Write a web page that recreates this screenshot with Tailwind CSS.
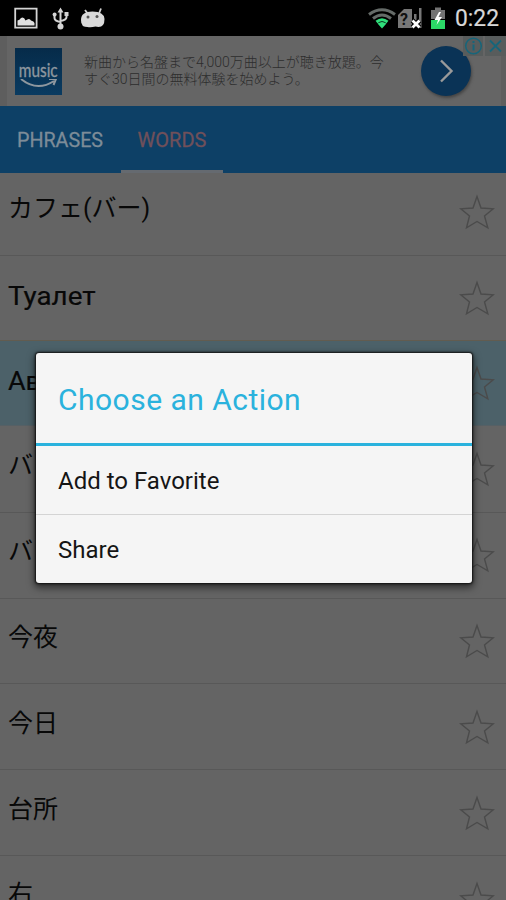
<!DOCTYPE html>
<html lang="ja">
<head>
<meta charset="utf-8">
<title>Words</title>
<script src="https://cdn.jsdelivr.net/npm/@tailwindcss/browser@4"></script>
</head>
<body class="bg-[#646464]">
<svg class="hidden"><symbol id="star" viewBox="0 0 36 36"><path d="M18 2.500 L22 14 L34.200 14.800 L25.500 22 L28.800 33.800 L18 27.500 L7.500 33.800 L10.500 22 L1.800 14.800 L14 14 Z" fill="none" stroke="#4b4b4b" stroke-width="1.400"/></symbol></svg>
<div class="relative w-[506px] h-[900px] overflow-hidden flex flex-col bg-[#646464] font-[Roboto,'Noto_Sans_CJK_JP',sans-serif]">
  <header class="h-[36px] shrink-0 bg-black flex items-center justify-between pl-[14px] pr-[6px]">
    <div class="flex items-center">
      <svg width="24" height="24" viewBox="0 0 24 24"><path d="M1.200 2.700h21.400v19H1.200z" fill="none" stroke="#d4d4d4" stroke-width="1.800"/><path d="M3.500 19.500v-5q2-.5 3.500-2.500q3-1.500 4.500 2.500q4-3 5.500 0q3 .5 3.500 2.500v2.500z" fill="#e0e0e0"/></svg>
      <svg class="ml-[14px]" width="18" height="24" viewBox="0 0 18 24" fill="none" stroke="#d4d4d4" stroke-width="2"><path d="M8.500 4v15M2.500 8v4q0 3 6 4M14.500 8v3q0 3-6 4"/><path d="M8.500 1.500l3 5h-6zM12.500 6h4v4h-4z" fill="#d4d4d4" stroke="none"/><circle cx="2.600" cy="8.500" r="2" fill="#d4d4d4" stroke="none"/><circle cx="8.500" cy="20.500" r="3" fill="#d4d4d4" stroke="none"/></svg>
      <svg class="ml-[10px]" width="26" height="24" viewBox="0 0 26 24"><path d="M5 4l3 4M21 2.500l-2 5" stroke="#d4d4d4" stroke-width="1.800"/><path d="M1 14q0-8.500 11.500-8.500t12 7.500q0 8-6 8l-3-.4q-5 1.200-8 .4q-5.500 0-5.500-3q-1-1-1-4z" fill="#dadada"/><circle cx="8" cy="11" r="1.500" fill="#555"/><circle cx="17" cy="10.500" r="1.500" fill="#555"/></svg>
    </div>
    <div class="flex items-center">
      <svg width="28" height="24" viewBox="0 0 28 24" fill="none"><path d="M1 8.500Q14-1 27 8.500M5 12.500Q14 5.500 23 12.500" stroke="#656b68" stroke-width="3"/><path d="M8.500 16Q14 11.500 19.500 16" stroke="#2fe07c" stroke-width="3"/><path d="M9.500 17.500q4.500-3 9 0L14 22.500z" fill="#2fe07c"/></svg>
      <svg class="ml-[1px]" width="26" height="24" viewBox="0 0 26 24"><path d="M1 22V9l6-6h8v19zM17 8h2.500v8H17zM22 2h2.500v20H22z" fill="#777"/><text x="3" y="18.500" font-size="16" font-weight="700" fill="#111" font-family="Roboto">?</text><path d="M15.500 14.500l7 7m0-7l-7 7" stroke="#000" stroke-width="5"/><path d="M15.500 14.500l7 7m0-7l-7 7" stroke="#fff" stroke-width="2.800"/></svg>
      <svg class="ml-[7px]" width="16" height="24" viewBox="0 0 16 24"><path d="M1 4h4V1.500h6V4h4v9H1z" fill="#737373"/><path d="M1 14h14v9H1z" fill="#2bd867"/><path d="M9 6L4.500 14H8l-1.500 5L12 11H8.500L11 6z" fill="#fff"/></svg>
      <span class="ml-[9px] text-[24px] leading-[38px] text-[#d8d8d8] w-[45px] whitespace-nowrap"><span class="inline-block origin-left scale-x-[.95] [-webkit-text-stroke:.2px]">0:22</span></span>
    </div>
  </header>

  <section class="relative h-[70px] shrink-0 bg-[#656565] border-l-[7px] border-r-[5px] border-[#5e5e5e] flex items-center pl-[8px]">
    <div class="size-[47px] bg-linear-to-b from-[#062b49] to-[#0a3b61] text-[#8e979f] flex flex-col items-center pt-[13px]">
      <span class="text-[16px] leading-[18px] font-[Lato] [-webkit-text-stroke:.3px]"><span class="inline-block scale-y-[1.15] scale-x-[.96]">music</span></span>
      <svg width="42" height="11" viewBox="0 0 42 11" fill="none" stroke="#8e979f" stroke-width="2"><path d="M3 0Q19 13 36 2M31 0l7 0l-2.500 6"/></svg>
    </div>
    <p class="ml-[22px] w-[309px] text-[14px] leading-[17px] text-[#2d2d2d] font-light whitespace-nowrap">新曲から名盤まで4,000万曲以上が聴き放題。今<br>すぐ30日間の無料体験を始めよう。</p>
    <div class="ml-[28px] size-[50px] rounded-full bg-[#0a3356] shadow-[1px_2px_3px_#444] flex items-center justify-center">
      <svg width="16" height="24" viewBox="0 0 16 24" fill="none" stroke="#9a9a9a" stroke-width="2.400"><path d="M3 1.500l10.500 10.500L3 22.500"/></svg>
    </div>
    <div class="absolute right-[-5px] top-0 flex gap-[2px]">
      <svg class="bg-[#585c5c]" width="20" height="20" viewBox="0 0 20 20" fill="none" stroke="#17657a" stroke-width="1.500"><circle cx="10.500" cy="10" r="7.800"/><path d="M10.500 8.500v6M10.500 5v2" stroke-width="2"/></svg>
      <svg class="bg-[#585c5c]" width="21" height="20" viewBox="0 0 21 20" stroke="#17657a" stroke-width="1.800"><path d="M5 4.500l11 11m0-11l-11 11"/></svg>
    </div>
  </section>

  <nav class="h-[67px] shrink-0 bg-[#0d4066] flex text-[20px] leading-[67px]">
    <span class="w-[121px] pl-[17px] text-[#7d8c98] pt-[1px] [-webkit-text-stroke:.3px]"><span class="inline-block origin-left scale-x-[.985]">PHRASES</span></span>
    <span class="w-[102px] h-[67px] pt-[1px] text-center text-[#70505a] border-b-[3px] border-[#656a70] [-webkit-text-stroke:.3px]">WORDS</span>
  </nav>

  <main class="flex-1 text-[25px] leading-[36px] text-[#080808]">
    <div class="h-[83px] px-[8px] pt-[18px] border-b border-[#585858] flex justify-between"><span>カフェ(バー)</span><svg class="size-[36px] mt-[3px] mr-[3px]"><use href="#star"/></svg></div>
    <div class="h-[85px] px-[8px] pt-[23px] border-b border-[#625c50] flex justify-between"><span class="origin-left scale-x-[1.11] [-webkit-text-stroke:.2px]">Туалет</span><svg class="size-[36px] mt-[1px] mr-[3px]"><use href="#star"/></svg></div>
    <div class="h-[85px] px-[8px] pt-[23px] bg-[#4c6169] border-b border-[#566065] flex justify-between"><span class="origin-left scale-x-[1.08] [-webkit-text-stroke:.2px]">Ав</span><svg class="size-[36px] mt-[1px] mr-[3px]"><use href="#star"/></svg></div>
    <div class="h-[87px] px-[8px] pt-[22px] border-b border-[#585858] flex justify-between"><span>バ</span><svg class="size-[36px] mt-[3px] mr-[3px]"><use href="#star"/></svg></div>
    <div class="h-[86px] px-[8px] pt-[21px] border-b border-[#585858] flex justify-between"><span>バ</span><svg class="size-[36px] mt-[3px] mr-[3px]"><use href="#star"/></svg></div>
    <div class="h-[85px] px-[8px] pt-[21px] border-b border-[#585858] flex justify-between"><span>今夜</span><svg class="size-[36px] mt-[3px] mr-[3px]"><use href="#star"/></svg></div>
    <div class="h-[86px] px-[8px] pt-[22px] border-b border-[#585858] flex justify-between"><span>今日</span><svg class="size-[36px] mt-[3px] mr-[3px]"><use href="#star"/></svg></div>
    <div class="h-[86px] px-[8px] pt-[22px] border-b border-[#585858] flex justify-between"><span>台所</span><svg class="size-[36px] mt-[3px] mr-[3px]"><use href="#star"/></svg></div>
    <div class="h-[86px] px-[8px] pt-[21px] flex justify-between"><span>右</span><svg class="size-[36px] mt-[4px] mr-[3px]"><use href="#star"/></svg></div>
  </main>

  <div class="absolute left-[36px] top-[353px] w-[436px] h-[230px] rounded-[3px] bg-[#f5f5f5] shadow-[0_0_2px_1px_#111,0_3px_7px_2px_rgba(0,0,0,.5)] flex flex-col overflow-hidden">
    <h1 class="h-[93px] shrink-0 border-b-[3px] border-[#2ab2dd] pl-[22px] text-[30px] leading-[94px] text-[#2ab2dd] tracking-[.480px]">Choose an Action</h1>
    <div class="h-[69px] shrink-0 border-b border-[#d4d4d4] pl-[22px] text-[24px] leading-[70px] text-[#151515]">Add to Favorite</div>
    <div class="flex-1 pl-[22px] text-[24px] leading-[70px] text-[#151515]">Share</div>
  </div>
</div>
</body>
</html>
